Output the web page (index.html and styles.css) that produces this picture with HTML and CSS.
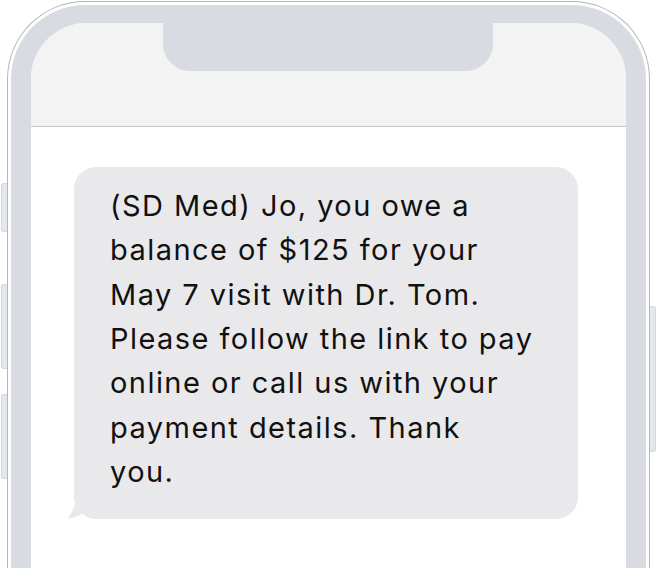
FILE: index.html
```html
<!DOCTYPE html>
<html>
<head>
<meta charset="utf-8">
<link rel="stylesheet" href="styles.css">
</head>
<body>
<div class="phone">
  <span class="btn btn-l1"></span>
  <span class="btn btn-l2"></span>
  <span class="btn btn-l3"></span>
  <span class="btn btn-r1"></span>
  <div class="frame">
    <div class="screen">
      <div class="notch"></div>
      <div class="header"></div>
      <div class="messages">
        <div class="bubble">
          <p class="text">(SD Med) Jo, you owe a<br>balance of $125 for your<br>May 7 visit with Dr. Tom.<br>Please follow the link to pay<br>online or call us with your<br>payment details. Thank<br>you.</p>
          <svg class="tail" width="24" height="24" viewBox="0 0 24 24"><path d="M8 0 C8 10 5 18 0 24 C6 24 11 22 15 19 C18 20 21 21 24 21 L24 0 Z" fill="#e9e9eb"/></svg>
        </div>
      </div>
    </div>
  </div>
</div>
</body>
</html>
```
FILE: styles.css
```css
html, body {
  margin: 0;
  padding: 0;
  background: #ffffff;
  overflow: hidden;
}
body {
  width: 658px;
  height: 568px;
  font-family: Inter, "Liberation Sans", sans-serif;
}
.phone {
  position: relative;
  margin: 1px 0 0 7px;
  width: 643px;
  height: 567px;
  border: 1px solid #b3b7bd;
  border-bottom: none;
  border-radius: 78px 78px 0 0;
  padding: 3px 3px 0 3px;
  box-sizing: border-box;
}
.btn {
  position: absolute;
  background: #e4e7eb;
  border: 1px solid #d3d6db;
  box-sizing: border-box;
}
.btn-l1, .btn-l2, .btn-l3 {
  left: -7px;
  width: 6px;
  border-right: none;
  border-radius: 3px 0 0 3px;
}
.btn-l1 { top: 181px; height: 49px; }
.btn-l2 { top: 282px; height: 85px; }
.btn-l3 { top: 392px; height: 85px; }
.btn-r1 {
  right: -7px;
  top: 304px;
  width: 6px;
  height: 146px;
  border-left: none;
  border-radius: 0 3px 3px 0;
}
.frame {
  background: #d8dce2;
  border-radius: 74px 74px 0 0;
  padding: 18px 20px 0 20px;
  height: 100%;
  box-sizing: border-box;
}
.screen {
  position: relative;
  background: #ffffff;
  border-radius: 56px 56px 0 0;
  height: 100%;
  overflow: hidden;
}
.notch {
  position: absolute;
  top: 0;
  left: 132px;
  width: 330px;
  height: 48px;
  background: #d8dce2;
  border-radius: 0 0 27px 27px;
}
.header {
  height: 103px;
  background: #f3f3f3;
  border-bottom: 1px solid #c4c6c9;
}
.messages {
  padding: 40px 0 0 43px;
}
.bubble {
  position: relative;
  width: 504px;
  height: 352px;
  box-sizing: border-box;
  background: #e9e9eb;
  border-radius: 22px;
  padding: 17px 8px 0 36px;
}
.text {
  margin: 0;
  font-size: 29px;
  line-height: 44.33px;
  color: #111111;
  letter-spacing: 1.45px;
}
.tail {
  position: absolute;
  left: -6px;
  bottom: 1px;
}
```
